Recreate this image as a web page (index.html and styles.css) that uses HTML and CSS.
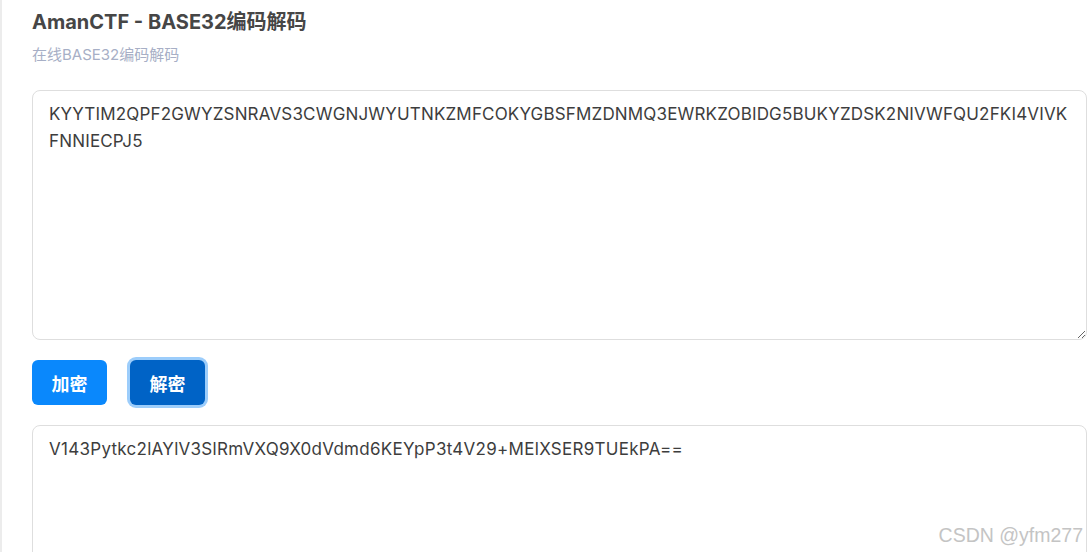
FILE: index.html
```html
<!DOCTYPE html>
<html lang="zh-CN">
<head>
  <meta charset="UTF-8">
  <meta name="viewport" content="width=device-width, initial-scale=1.0">
  <title>AmanCTF - BASE32编码解码</title>
  <link rel="stylesheet" href="styles.css">
</head>
<body>
  <div class="side-edge"></div>

  <main class="tool">
    <h1 class="tool-title">AmanCTF - BASE32编码解码</h1>
    <p class="tool-desc">在线BASE32编码解码</p>

    <textarea class="box box-input">KYYTIM2QPF2GWYZSNRAVS3CWGNJWYUTNKZMFCOKYGBSFMZDNMQ3EWRKZOBIDG5BUKYZDSK2NIVWFQU2FKI4VIVKFNNIECPJ5</textarea>

    <div class="actions">
      <button class="btn">加密</button>
      <button class="btn btn-active">解密</button>
    </div>

    <textarea class="box box-output">V143Pytkc2lAYlV3SlRmVXQ9X0dVdmd6KEYpP3t4V29+MElXSER9TUEkPA==</textarea>
  </main>

  <div class="watermark">CSDN @yfm277</div>
</body>
</html>
```

FILE: styles.css
```css
html {
  overflow: hidden;
}

body {
  margin: 0;
  height: 552px;
  overflow: hidden;
  display: flex;
  background: #fff;
  font-family: Inter, "Noto Sans CJK SC", sans-serif;
  color: #444;
  position: relative; /* 水印定位用 */
}

.side-edge {
  width: 2px;
  flex-shrink: 0;
  background: #ececec;
}

.tool {
  flex: 1;
  padding: 9px 1px 0 30px;
  display: flex;
  flex-direction: column;
  overflow: hidden;
}

.tool-title {
  margin: 0;
  font-size: 20px;
  line-height: 26px;
  font-weight: 700;
  color: #464646;
}

.tool-desc {
  margin: 10px 0 0;
  font-size: 15px;
  line-height: 20px;
  color: #a7afc6;
}

.box {
  box-sizing: border-box;
  width: 100%;
  flex-shrink: 0;
  border: 1px solid #dedede;
  border-radius: 8px;
  padding: 10px 16px;
  font-family: Inter, "Noto Sans CJK SC", sans-serif;
  font-size: 17px;
  line-height: 27px;
  color: #3d3d3d;
  background: #fff;
  outline: none;
}

.box-input {
  margin-top: 25px;
  height: 250px;
  resize: vertical;
  letter-spacing: 0.17px;
}

.box-output {
  margin-top: 20px;
  height: 200px;
  resize: none;
  letter-spacing: 0.28px;
}

.actions {
  margin-top: 20px;
  display: flex;
  gap: 23px;
}

.btn {
  width: 75px;
  height: 45px;
  border: none;
  border-radius: 6px;
  background: #0a88fc;
  color: #fff;
  font-family: Inter, "Noto Sans CJK SC", sans-serif;
  font-size: 18px;
  font-weight: 700;
  cursor: pointer;
}

/* 当前按下的按钮 */
.btn-active {
  background: #0063c6;
  box-shadow: 0 0 0 3px #9ccdfb;
}

.watermark {
  position: absolute;
  right: 5px;
  bottom: 5px;
  font-family: "Liberation Sans", Arial, sans-serif;
  font-size: 19.5px;
  color: #c4c4c4;
  text-shadow: 0 0 2px #fff;
}
```
